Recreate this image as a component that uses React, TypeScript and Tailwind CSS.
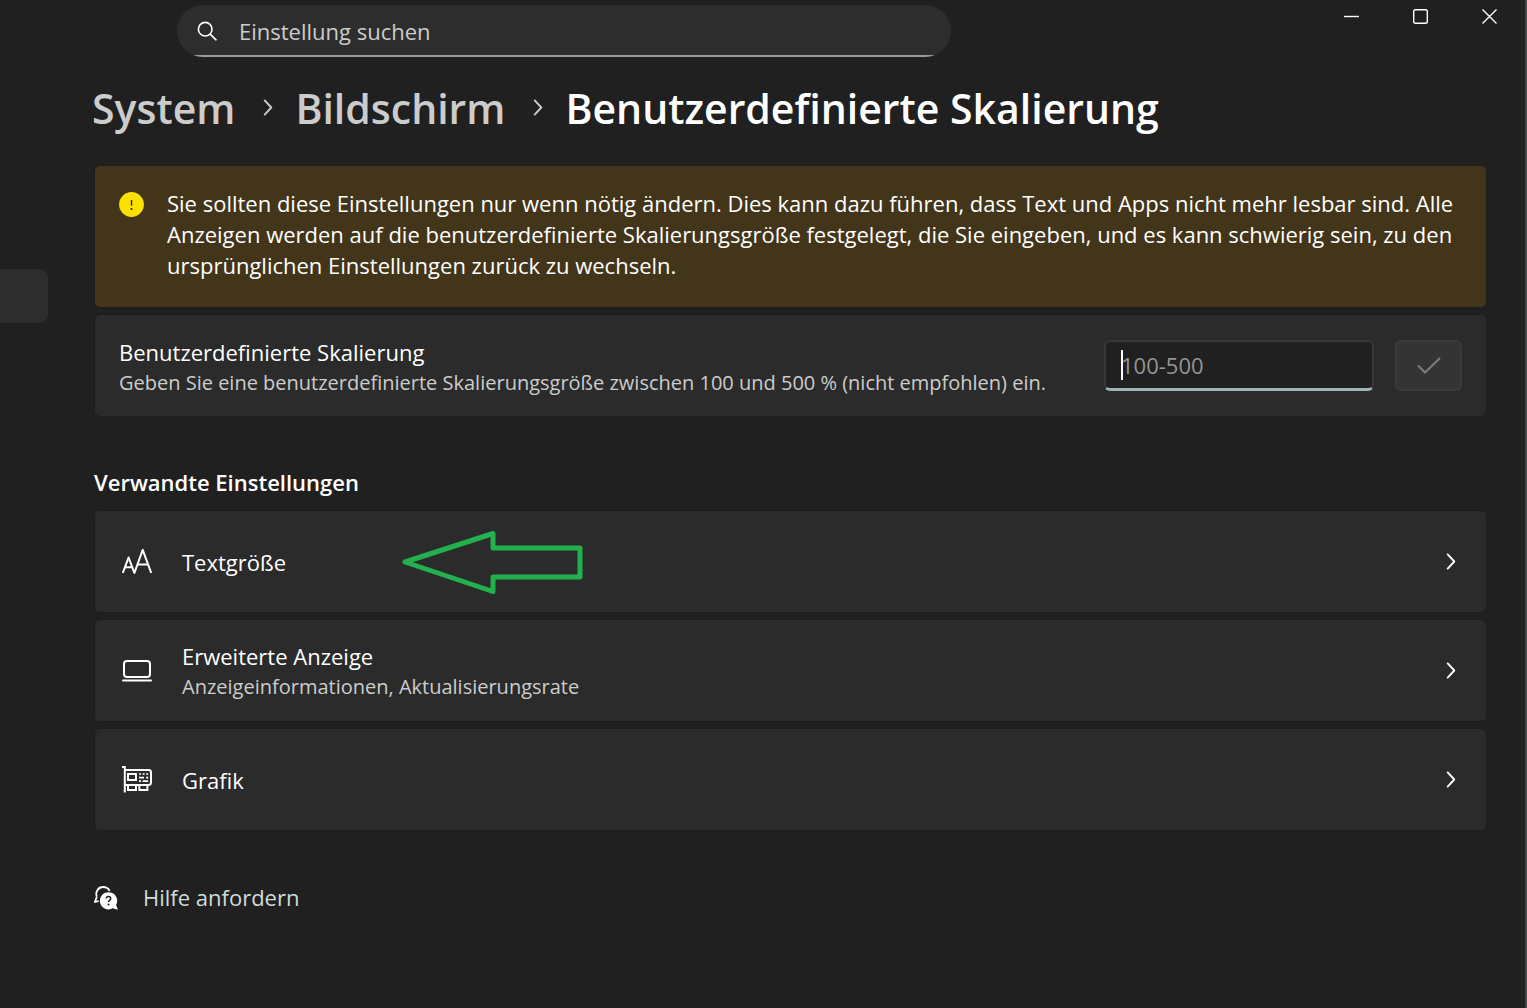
import type { ReactNode } from "react";

function ChevronRight({ className }: { className?: string }) {
	return (
		<svg
			aria-hidden="true"
			className={className}
			fill="none"
			stroke="currentColor"
			strokeLinecap="round"
			strokeLinejoin="round"
			strokeWidth="2"
			viewBox="0 0 10 18"
		>
			<path d="M1.5 1.5 8.5 9l-7 7.5" />
		</svg>
	);
}

function SearchIcon() {
	return (
		<svg
			aria-hidden="true"
			className="size-5"
			fill="none"
			stroke="currentColor"
			strokeLinecap="round"
			strokeWidth="1.6"
			viewBox="0 0 20 20"
		>
			<circle cx="8.2" cy="8.2" r="6.8" />
			<path d="m13.2 13.2 5.8 5.6" />
		</svg>
	);
}

function WarningIcon() {
	return (
		<svg aria-hidden="true" className="size-[25px]" viewBox="0 0 25 25">
			<circle cx="12.5" cy="12.5" fill="#fce100" r="12.4" />
			<path d="M12.5 8v5.6" stroke="#2b2300" strokeWidth="1.4" />
			<circle cx="12.5" cy="17" fill="#2b2300" r="1.1" />
		</svg>
	);
}

function TextSizeIcon() {
	return (
		<svg
			aria-hidden="true"
			className="h-[26px] w-[30px]"
			fill="none"
			stroke="currentColor"
			strokeLinejoin="round"
			strokeWidth="2"
			viewBox="0 0 30 26"
		>
			<path d="M.8 24 6.6 8.500 12.400 24 20.700.8 29.200 24" />
			<path d="M2.800 18.300h7.600M14.800 15.400h11.400" />
		</svg>
	);
}

function LaptopIcon() {
	return (
		<svg
			aria-hidden="true"
			className="h-[22px] w-[30px]"
			fill="none"
			stroke="currentColor"
			strokeLinecap="round"
			strokeWidth="2"
			viewBox="0 0 30 22"
		>
			<rect height="16" rx="3" width="26" x="2" y="1" />
			<path d="M1 20.500h28" />
		</svg>
	);
}

function GraphicsCardIcon() {
	return (
		<svg
			aria-hidden="true"
			className="h-[27px] w-[30px]"
			fill="none"
			stroke="currentColor"
			strokeWidth="2"
			viewBox="0 0 30 27"
		>
			<path d="M0 1h2.800v25.500" />
			<path d="M2.800 4h23.800Q29 4 29 6.400v10.200q0 2.400-2.400 2.400H2.800" />
			<path d="M6 19v5h8v-5M17.400 19v5h8v-5" />
			<rect height="6" width="8" x="6" y="8" />
			<path
				d="M17 8h2M20.600 8h2M24.200 8h2M17 11.600h5M24.200 11.600h2M17 15.200h2M20.600 15.200h5.600"
				strokeWidth="1.7"
			/>
		</svg>
	);
}

function HelpIcon() {
	return (
		<svg aria-hidden="true" className="size-6" viewBox="0 0 24 24">
			<path
				d="M2.8 10.8 1 15.8l3.6-.6M2.8 10.8C1 5.500 4.500 1 9 1c3.200 0 5.600 1.600 6.600 4"
				fill="none"
				stroke="currentColor"
				strokeWidth="1.8"
			/>
			<path
				d="M14.500 6.200a8.600 8.600 0 1 0 4.200 16.100l5.200 1.500-1.800-4.800A8.600 8.600 0 0 0 14.500 6.200Z"
				fill="currentColor"
			/>
			<path
				d="M12.300 12.600c0-2.900 4.400-2.900 4.400-.1 0 1.700-2.200 1.700-2.200 3.600"
				fill="none"
				stroke="#202020"
				strokeWidth="1.5"
			/>
			<circle cx="14.500" cy="18.600" fill="#202020" r="1" />
		</svg>
	);
}

function ArrowMark() {
	return (
		<svg
			aria-hidden="true"
			className="pointer-events-none absolute top-[18px] left-[306px] h-[66px] w-[184px]"
			fill="none"
			stroke="#22b14c"
			strokeLinejoin="round"
			strokeWidth="5"
			viewBox="0 0 184 66"
		>
			<path d="M4 33 92 4.500V19h87v29H92v14.500Z" />
		</svg>
	);
}

const windowButtons = [
	{ label: "Minimieren", path: "M0 7.500h15" },
	{
		label: "Maximieren",
		path: "M2.500.7h10q1.800 0 1.800 1.800v10q0 1.800-1.800 1.800h-10q-1.800 0-1.800-1.800v-10q0-1.800 1.800-1.800Z",
	},
	{ label: "Schließen", path: "m.5.5 14 14m0-14-14 14" },
];

function TitleBar() {
	return (
		<header className="flex items-start justify-between pl-[177px]">
			<label className="relative mt-[5px] flex h-[52px] w-[774px] items-center overflow-hidden rounded-[26px] bg-[#2d2d2d] pl-5 text-white">
				<SearchIcon />
				<input
					aria-label="Einstellung suchen"
					className="ml-[22px] min-w-0 flex-1 bg-transparent text-[22px] leading-[31px] outline-none placeholder:text-[#cccccc]"
					placeholder="Einstellung suchen"
					type="search"
				/>
				<span className="absolute inset-x-0 bottom-0 h-0.5 bg-[#9a9a9a]" />
			</label>
			<div className="mr-px flex">
				{windowButtons.map(({ label, path }) => (
					<button
						aria-label={label}
						className="flex h-[33px] w-[69px] items-center justify-center"
						key={label}
						type="button"
					>
						<svg
							aria-hidden="true"
							className="size-[15px]"
							fill="none"
							stroke="currentColor"
							strokeWidth="1.4"
							viewBox="0 0 15 15"
						>
							<path d={path} />
						</svg>
					</button>
				))}
			</div>
		</header>
	);
}

function Breadcrumb() {
	return (
		<nav
			aria-label="Pfad"
			className="-ml-0.5 flex h-[101px] items-center text-[41px] leading-[60px] font-semibold whitespace-nowrap text-[#cccccc]"
		>
			<a href="#system">System</a>
			<ChevronRight className="mr-[22px] ml-7 h-[17px] w-[10px]" />
			<a href="#bildschirm">Bildschirm</a>
			<ChevronRight className="mr-[22px] ml-7 h-[17px] w-[10px]" />
			<h1 className="text-white">Benutzerdefinierte Skalierung</h1>
		</nav>
	);
}

function SettingsLink({
	icon,
	title,
	description,
	href,
	children,
}: {
	icon: ReactNode;
	title: string;
	description?: string;
	href: string;
	children?: ReactNode;
}) {
	return (
		<a
			className="relative flex h-[103px] items-center rounded-md border border-[#1d1d1d] bg-[#2b2b2b] pr-[30px] pl-[27px]"
			href={href}
		>
			{icon}
			<span className="ml-[30px] flex-1 pt-0.5">
				<span className="block text-[22px] leading-[31px]">{title}</span>
				{description && (
					<span className="block text-[20px] leading-[30px] text-[#cccccc]">
						{description}
					</span>
				)}
			</span>
			<ChevronRight className="h-[17px] w-[10px]" />
			{children}
		</a>
	);
}

export default function App() {
	return (
		<div className="min-h-screen border-r-2 border-[#3f4b4e] bg-[#202020] font-['Open_Sans',sans-serif] text-white">
			<TitleBar />
			<div className="flex">
				<aside className="w-12 shrink-0 pt-[212px]">
					<div className="h-[54px] rounded-r-lg bg-[#2d2d2d]" />
				</aside>
				<main className="min-w-0 flex-1 pr-[38px] pb-10 pl-[46px]">
					<Breadcrumb />
					<div className="mt-[7px] flex gap-[23px] rounded-md border border-[#1d1d1d] bg-[#433519] px-6 pt-[22px] pb-[26px]">
						<div className="mt-1 shrink-0">
							<WarningIcon />
						</div>
						<p className="text-[22px] leading-[31px]">
							Sie sollten diese Einstellungen nur wenn nötig ändern. Dies kann
							dazu führen, dass Text und Apps nicht mehr lesbar sind. Alle
							Anzeigen werden auf die benutzerdefinierte Skalierungsgröße
							festgelegt, die Sie eingeben, und es kann schwierig sein, zu den
							ursprünglichen Einstellungen zurück zu wechseln.
						</p>
					</div>
					<form className="mt-[6px] flex h-[103px] items-center rounded-md border border-[#1d1d1d] bg-[#2b2b2b] px-6">
						<label className="flex-1 pt-1" htmlFor="scale">
							<span className="block text-[22px] leading-[31px]">
								Benutzerdefinierte Skalierung
							</span>
							<span className="block text-[20px] leading-[30px] text-[#cccccc]">
								Geben Sie eine benutzerdefinierte Skalierungsgröße zwischen 100
								und 500 % (nicht empfohlen) ein.
							</span>
						</label>
						<div className="relative">
							<input
								className="block h-[51px] w-[270px] rounded-md border-2 border-[#383838] border-b-[3px] border-b-[#9fb3b4] bg-[#202020] pl-[15px] text-[22px] outline-none placeholder:text-[#949494]"
								id="scale"
								placeholder="100-500"
								type="text"
							/>
							<span className="absolute top-[10px] left-[17px] h-[30px] w-[2px] bg-white" />
						</div>
						<button
							aria-label="Übernehmen"
							className="ml-[21px] flex h-[51px] w-[67px] items-center justify-center rounded-md border-2 border-[#3b3b3b] bg-[#343434] text-[#7d7d7d]"
							disabled
							type="submit"
						>
							<svg
								aria-hidden="true"
								className="h-[17px] w-[24px]"
								fill="none"
								stroke="currentColor"
								strokeWidth="2"
								viewBox="0 0 24 17"
							>
								<path d="m1 8.500 7 7L23 1" />
							</svg>
						</button>
					</form>
					<h2 className="mt-[50px] mb-[12px] text-[22px] leading-[31px] font-semibold">
						Verwandte Einstellungen
					</h2>
					<div className="flex flex-col gap-[6px]">
						<SettingsLink
							href="#textgroesse"
							icon={<TextSizeIcon />}
							title="Textgröße"
						>
							<ArrowMark />
						</SettingsLink>
						<SettingsLink
							description="Anzeigeinformationen, Aktualisierungsrate"
							href="#anzeige"
							icon={<LaptopIcon />}
							title="Erweiterte Anzeige"
						/>
						<SettingsLink
							href="#grafik"
							icon={<GraphicsCardIcon />}
							title="Grafik"
						/>
					</div>
					<a
						className="mt-[51px] flex w-fit items-center gap-[25px] text-[22px] leading-[31px]"
						href="#hilfe"
					>
						<HelpIcon />
						<span className="text-[#cfdcdc]">Hilfe anfordern</span>
					</a>
				</main>
			</div>
		</div>
	);
}
